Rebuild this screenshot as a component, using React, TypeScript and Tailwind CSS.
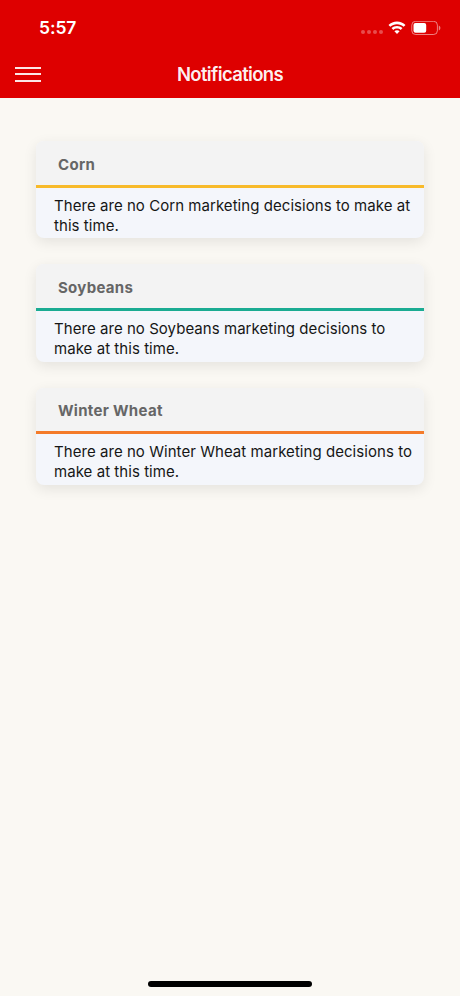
const notifications = [
  {
    crop: "Corn",
    border: "border-[#f8ba2a]",
    message: "There are no Corn marketing decisions to make at this time."
  },
  {
    crop: "Soybeans",
    border: "border-[#1aab92]",
    message: "There are no Soybeans marketing decisions to make at this time."
  },
  {
    crop: "Winter Wheat",
    border: "border-[#f47b2a]",
    message: "There are no Winter Wheat marketing decisions to make at this time."
  }
]

const StatusBar = () => (
  <div className="flex h-[50px] items-center justify-between pt-[6px] pr-[19px] pl-[39px]">
    <span className="text-[17.5px] leading-6 font-semibold tracking-[-0.1px]">5:57</span>
    <div className="flex items-center">
      {/* No signal */}
      <div className="mt-[8px] mr-[5px] flex gap-[2px]">
        <span className="size-[4px] rounded-full bg-white/30" />
        <span className="size-[4px] rounded-full bg-white/30" />
        <span className="size-[4px] rounded-full bg-white/30" />
        <span className="size-[4px] rounded-full bg-white/30" />
      </div>
      <svg width="18" height="14" viewBox="0 0 18 14" fill="white">
        <path d="M9 0.6C12.3 0.6 15.3 1.9 17.5 4L15.7 5.8C13.9 4.2 11.6 3.2 9 3.2S4.1 4.2 2.3 5.8L0.5 4C2.7 1.9 5.7 0.6 9 0.6Z" />
        <path d="M9 5C11.1 5 13 5.8 14.5 7.1L12.7 8.9C11.7 8 10.4 7.5 9 7.5S6.3 8 5.3 8.9L3.5 7.1C5 5.8 6.9 5 9 5Z" />
        <path d="M9 9.2C10 9.2 10.9 9.6 11.6 10.2L9 13L6.4 10.2C7.1 9.6 8 9.2 9 9.2Z" />
      </svg>
      <svg className="ml-[5px]" width="30" height="15" viewBox="0 0 30 15" fill="none">
        <rect x="0.8" y="0.3" width="25.6" height="13.2" rx="3.8" stroke="white" strokeOpacity="0.5" />
        <rect x="2.5" y="2" width="12.7" height="9.8" rx="2" fill="white" />
        <path d="M27.8 4.5V9.5C28.8 9 29.4 8.1 29.4 7S28.8 5 27.8 4.5Z" fill="white" fillOpacity="0.5" />
      </svg>
    </div>
  </div>
)

const App = () => {
  return (
    <div className="flex h-[996px] w-full flex-col bg-[#faf8f3] font-[Inter,sans-serif]">
      {/* Header */}
      <header className="h-[98px] shrink-0 bg-[#de0000] text-white">
        <StatusBar />
        <div className="grid h-[48px] grid-cols-[1fr_auto_1fr] items-center px-[15px]">
          <button aria-label="Menu" className="flex w-[26px] flex-col gap-[4.5px]">
            <span className="h-[2px] w-full bg-white/90" />
            <span className="h-[2px] w-full bg-white/90" />
            <span className="h-[2px] w-full bg-white/90" />
          </button>
          <h1 className="pt-px text-[18.5px] font-semibold tracking-[-0.65px] text-white/95">Notifications</h1>
        </div>
      </header>

      {/* Crop cards */}
      <main className="flex flex-1 flex-col gap-[26px] px-9 pt-[43px]">
        {notifications.map((item) => (
          <section
            key={item.crop}
            className="h-[97.3px] overflow-hidden rounded-[8px] bg-[#f4f6fb] shadow-[0_4px_14px_rgba(0,0,0,0.09)]"
          >
            <h2
              className={`h-[46.5px] border-b-[3px] bg-[#f3f3f3] pt-[11.8px] pl-[22px] text-[15px] leading-6 font-bold tracking-[0.3px] text-[#666] ${item.border}`}
            >
              {item.crop}
            </h2>
            <p className="pt-[8.3px] pr-2 pl-[18px] text-[15px] leading-5 tracking-[0.05px] text-[#161616]">{item.message}</p>
          </section>
        ))}
      </main>

      {/* Home indicator */}
      <div className="mx-auto mb-[9px] h-[6px] w-[164px] rounded-full bg-black" />
    </div>
  )
}

export default App
